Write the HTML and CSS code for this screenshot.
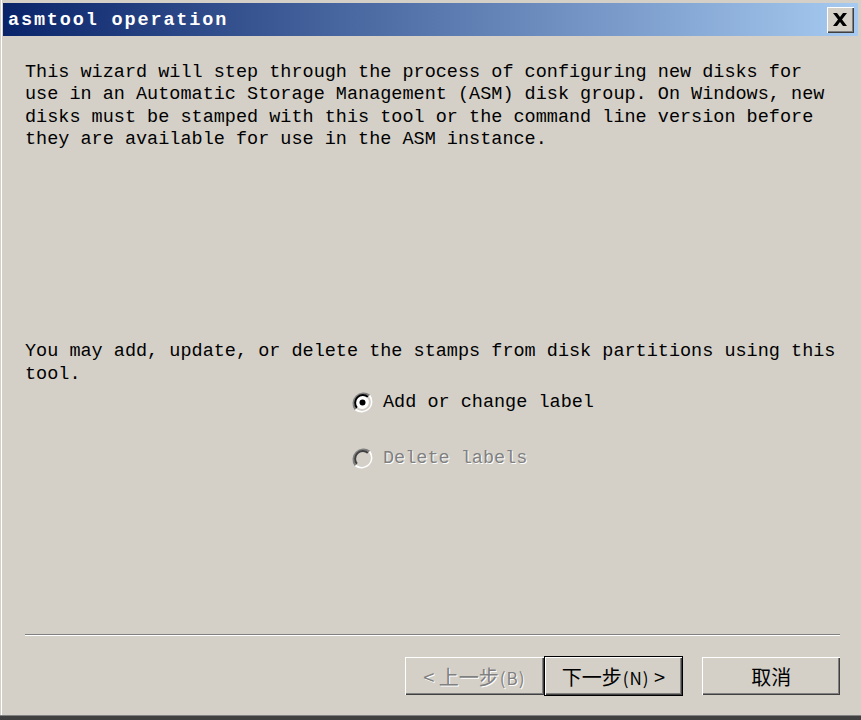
FILE: index.html
```html
<!DOCTYPE html>
<html>
<head>
<meta charset="utf-8">
<link rel="stylesheet" href="styles.css">
</head>
<body>
<div class="window">
  <div class="titlebar">
    <span class="title">asmtool operation</span>
    <button class="close" aria-label="close">
      <svg width="16" height="13" viewBox="0 0 16 13"><path d="M1 0h4l3 4 3-4h4L10 6.5 15 13h-4L8 9 5 13H1l5-6.5z" fill="#000"/></svg>
    </button>
  </div>
  <div class="body">
    <p class="para p1">This wizard will step through the process of configuring new disks for use in an Automatic Storage Management (ASM) disk group. On Windows, new disks must be stamped with this tool or the command line version before they are available for use in the ASM instance.</p>
    <p class="para p2">You may add, update, or delete the stamps from disk partitions using this tool.</p>
    <div class="radios">
      <div class="radio">
        <svg class="rb" width="21" height="21" viewBox="0 0 21 21">
          <circle cx="10.5" cy="10.5" r="9" fill="#fff"/>
          <path d="M17.5 3.5A10 10 0 0 0 3.5 17.5" fill="none" stroke="#808080" stroke-width="2"/>
          <path d="M3.5 17.5A10 10 0 0 0 17.5 3.5" fill="none" stroke="#ffffff" stroke-width="2"/>
          <path d="M16 5A7.8 7.8 0 0 0 5 16" fill="none" stroke="#000" stroke-width="2"/>
          <path d="M5 16A7.8 7.8 0 0 0 16 5" fill="none" stroke="#d4d0c8" stroke-width="2"/>
          <circle cx="10.5" cy="10.5" r="3" fill="#000"/>
        </svg>
        <span class="rlabel">Add or change label</span>
      </div>
      <div class="radio disabled">
        <svg class="rb" width="21" height="21" viewBox="0 0 21 21">
          <circle cx="10.5" cy="10.5" r="9" fill="#d4d0c8"/>
          <path d="M17.5 3.5A10 10 0 0 0 3.5 17.5" fill="none" stroke="#808080" stroke-width="2"/>
          <path d="M3.5 17.5A10 10 0 0 0 17.5 3.5" fill="none" stroke="#ffffff" stroke-width="2"/>
          <path d="M16 5A7.8 7.8 0 0 0 5 16" fill="none" stroke="#404040" stroke-width="2"/>
          <path d="M5 16A7.8 7.8 0 0 0 16 5" fill="none" stroke="#d4d0c8" stroke-width="2"/>
        </svg>
        <span class="rlabel">Delete labels</span>
      </div>
    </div>
    <div class="footer">
      <div class="sep"></div>
      <div class="buttons">
        <button class="btn disabled"><span class="btxt">&lt; 上一步<span class="acc">(B)</span></span></button>
        <button class="btn default"><span class="btxt">下一步<span class="acc">(N)</span> &gt;</span></button>
        <button class="btn cancel"><span class="btxt">取消</span></button>
      </div>
    </div>
  </div>
  <div class="bottomedge"></div>
</div>
</body>
</html>
```
FILE: styles.css
```css
html, body {
  margin: 0;
  padding: 0;
  background: #d4d0c8;
}
.window {
  width: 861px;
  height: 720px;
  box-sizing: border-box;
  background: #d4d0c8;
  display: flex;
  flex-direction: column;
  border-left: 1px solid #d4d0c8;
  box-shadow: inset 1px 0 0 #ffffff;
  padding: 3px 3px 0 2px;
}
.titlebar {
  height: 33px;
  flex: none;
  background: linear-gradient(to right, #0a246a, #a6caf0);
  display: flex;
  align-items: center;
  justify-content: space-between;
  padding: 0 4px 0 5px;
}
.title {
  color: #fff;
  font-family: "Liberation Mono", "DejaVu Sans Mono", monospace;
  font-weight: bold;
  font-size: 18.5px;
  letter-spacing: 1.85px;
  position: relative;
  top: 1px;
}
.close {
  width: 27px;
  height: 26px;
  margin: 0;
  padding: 0;
  background: #d4d0c8;
  border: none;
  box-shadow: inset 1px 1px 0 #ffffff, inset -1px -1px 0 #404040, inset -2px -2px 0 #808080;
  display: flex;
  align-items: center;
  justify-content: center;
}
.close svg { display: block; margin-top: -1px; margin-left: -1px; }
.body {
  flex: 1;
  display: flex;
  flex-direction: column;
  padding: 0 18px 0 22px;
}
.para {
  margin: 0;
  font-family: "Liberation Mono", "DejaVu Sans Mono", monospace;
  font-size: 18.5px;
  line-height: 22.33px;
  color: #000;
}
.p1 { margin-top: 26px; width: 815px; }
.p2 { margin-top: 190px; width: 815px; }
.radios {
  display: flex;
  flex-direction: column;
  gap: 34px;
  margin-top: 6px;
  padding-left: 327px;
}
.radio {
  height: 22px;
  display: flex;
  align-items: center;
  gap: 10px;
  font-family: "Liberation Mono", "DejaVu Sans Mono", monospace;
  font-size: 18.5px;
  color: #000;
}
.rb { flex: none; display: block; }
.radio.disabled .rlabel {
  color: #808080;
  text-shadow: 1px 1px 0 #ffffff;
}
.footer {
  margin-top: auto;
  padding-bottom: 19px;
}
.sep {
  height: 1px;
  background: #808080;
  border-bottom: 1px solid #ffffff;
  width: 815px;
}
.buttons {
  display: flex;
  margin-top: 21px;
  padding-left: 380px;
}
.btn {
  height: 38px;
  width: 139px;
  margin: 0;
  padding: 0;
  background: #d4d0c8;
  border: none;
  font-family: "Noto Sans CJK SC", "Liberation Sans", sans-serif;
  font-size: 20px;
  color: #000;
  box-shadow: inset 1px 1px 0 #ffffff, inset -1px -1px 0 #404040, inset -2px -2px 0 #808080;
  display: flex;
  align-items: center;
  justify-content: center;
  white-space: pre;
}
.btxt { white-space: pre; }
.acc { font-size: 17px; margin-left: 1px; letter-spacing: 1px; }
.btn.disabled {
  color: #808080;
  text-shadow: 1px 1px 0 #ffffff;
}
.btn.default {
  width: 140px;
  height: 40px;
  margin-top: -1px;
  border: 1px solid #000;
}
.btn.cancel { margin-left: 19px; width: 138px; }
.bottomedge {
  height: 4px;
  flex: none;
  margin: 0 -3px 0 -3px;
  background: #404040;
  border-top: 1px solid #808080;
}
```
